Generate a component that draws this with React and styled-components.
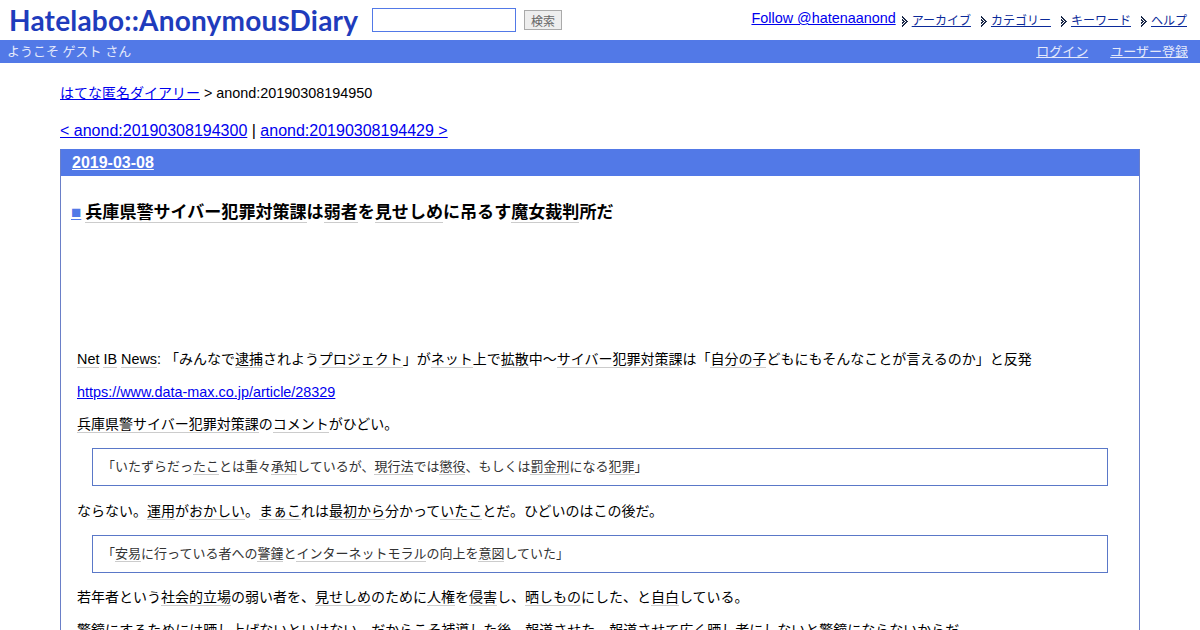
import styled, { createGlobalStyle } from 'styled-components';

const GlobalStyle = createGlobalStyle`
  html, body {
    margin: 0;
    padding: 0;
    background: #fff;
    height: 630px;
    overflow: hidden;
    font-family: 'Liberation Sans', 'Noto Sans CJK JP', sans-serif;
    font-size: 14px;
    color: #000;
  }
  a { color: #0000ee; }
`;

const Header = styled.header`
  height: 40px;
  display: flex;
  align-items: flex-start;
  justify-content: space-between;
  padding: 0 13px 0 9px;
`;

const HeaderLeft = styled.div`
  display: flex;
  align-items: flex-start;
`;

const Logo = styled.h1`
  margin: 4px 14px 0 0;
  width: 349px;
  font-family: 'Lato', sans-serif;
  font-size: 28px;
  line-height: 33px;
  font-weight: 700;
  color: #1f3cbc;
  white-space: nowrap;
  letter-spacing: 0.2px;
`;

const SearchForm = styled.form`
  display: flex;
  align-items: center;
  gap: 8px;
  margin-top: 8px;
`;

const SearchInput = styled.input`
  box-sizing: border-box;
  width: 144px;
  height: 24px;
  border: 1px solid #5279e7;
  padding: 2px 4px;
  background: #fff;
`;

const SearchButton = styled.button`
  box-sizing: border-box;
  height: 20px;
  width: 38px;
  padding: 0;
  border: 1px solid #aaa;
  background: #eee;
  color: #666;
  font-family: inherit;
  font-size: 12px;
`;

const HeaderRight = styled.nav`
  display: flex;
  align-items: flex-start;
  margin-top: 10px;
`;

const FollowLink = styled.a`
  font-size: 14.4px;
  line-height: 16px;
  margin-right: 6px;
`;

const MenuItem = styled.a`
  display: inline-flex;
  align-items: center;
  gap: 3px;
  font-size: 12px;
  line-height: 16px;
  margin-top: 3px;
  margin-left: ${({ $first }) => ($first ? '0' : '10px')};
  color: #0b2a99;
  text-decoration: none;
  span { text-decoration: underline; }
`;

// small dithered double arrow, one string per pixel row
const ARROW_ROWS = [
  '#......',
  '##.....',
  '.##....',
  '#.##...',
  '##.##..',
  '.##.##.',
  '##.##..',
  '#.##...',
  '.##....',
  '##.....',
  '#......',
];

const Arrow = () => (
  <svg width="7" height="11" viewBox="0 0 7 11" shapeRendering="crispEdges">
    {ARROW_ROWS.map((row, y) =>
      row.split('').map((c, x) =>
        c === '#' ? <rect key={`${x}-${y}`} x={x} y={y} width="1" height="1" fill="#1c2a4a" /> : null
      )
    )}
  </svg>
);

const WelcomeBar = styled.div`
  box-sizing: border-box;
  height: 23px;
  background: #5279e7;
  color: #e4e9fb;
  display: flex;
  justify-content: space-between;
  align-items: center;
  font-size: 13px;
  padding: 0 12px 3px 7px;
`;

const BarLinks = styled.div`
  display: flex;
  gap: 22px;
  a { color: #e4e9fb; }
`;

const Main = styled.main`
  padding: 21px 60px 0;
`;

const Breadcrumb = styled.div`
  font-size: 14px;
  line-height: 18px;
  height: 18px;
`;

const Latin = styled.span`
  font-size: 14.4px;
`;

const Pager = styled.div`
  margin-top: 20px;
  font-size: 16px;
  line-height: 18px;
`;

const Day = styled.section`
  margin-top: 9px;
  border: 1px solid #5279e7;
  border-color: #5279e7 #6a7fc8 #6a7fc8;
  padding-bottom: 20px;
`;

const DayHeader = styled.h2`
  margin: 0;
  height: 26px;
  padding-left: 11px;
  background: #5279e7;
  font-size: 16px;
  line-height: 26px;
  a { color: #fff; }
`;

const Section = styled.div`
  padding: 26px 16px 0;
`;

const Title = styled.h3`
  margin: 0 0 0 -6px;
  font-size: 17.06px;
  line-height: 22px;
  font-weight: 700;
  height: 141px;
`;

const Square = styled.a`
  color: #5279e7;
  margin-right: 4px;
`;

const Kw = styled.span`
  border-bottom: 1px solid #ccc;
`;

const Para = styled.p`
  margin: 0;
  font-size: 14px;
  line-height: 20.6px;
  padding: 6px 0;
`;

const Quote = styled.blockquote`
  box-sizing: border-box;
  margin: 7.6px 15px 8.4px;
  height: 38px;
  border: 1px solid #5a78c8;
  padding: 0 9px;
  font-size: 13px;
  line-height: 36px;
  color: #333;
`;

export default function App() {
  return (
    <>
      <GlobalStyle />
      <Header>
        <HeaderLeft>
          <Logo>Hatelabo::AnonymousDiary</Logo>
          <SearchForm onSubmit={(e) => e.preventDefault()}>
            <SearchInput type="text" />
            <SearchButton type="button">検索</SearchButton>
          </SearchForm>
        </HeaderLeft>
        <HeaderRight>
          <FollowLink href="#">Follow @hatenaanond</FollowLink>
          <MenuItem href="#" $first><Arrow /><span>アーカイブ</span></MenuItem>
          <MenuItem href="#"><Arrow /><span>カテゴリー</span></MenuItem>
          <MenuItem href="#"><Arrow /><span>キーワード</span></MenuItem>
          <MenuItem href="#"><Arrow /><span>ヘルプ</span></MenuItem>
        </HeaderRight>
      </Header>
      <WelcomeBar>
        <span>ようこそ ゲスト さん</span>
        <BarLinks>
          <a href="#">ログイン</a>
          <a href="#">ユーザー登録</a>
        </BarLinks>
      </WelcomeBar>
      <Main>
        <Breadcrumb>
          <a href="#">はてな匿名ダイアリー</a> <Latin>&gt; anond:20190308194950</Latin>
        </Breadcrumb>
        <Pager>
          <a href="#">&lt; anond:20190308194300</a> | <a href="#">anond:20190308194429 &gt;</a>
        </Pager>
        <Day>
          <DayHeader><a href="#">2019-03-08</a></DayHeader>
          <Section>
            <Title>
              <Square href="#">■</Square>
              <Kw>兵庫県警サイバー犯罪対策課</Kw>は<Kw>弱者</Kw>を<Kw>見せしめ</Kw>に吊るす<Kw>魔女裁判</Kw>所だ
            </Title>
            <Para>
              <Latin><Kw>Net</Kw> <Kw>IB</Kw> <Kw>News</Kw>: </Latin>「みんなで<Kw>逮捕</Kw>されよう<Kw>プロジェクト</Kw>」が<Kw>ネット</Kw>上で<Kw>拡散</Kw>中～<Kw>サイバー犯罪対策課</Kw>は「<Kw>自分の子</Kw>どもにもそんなことが言えるのか」と反発
            </Para>
            <Para><Latin><a href="#">https://www.data-max.co.jp/article/28329</a></Latin></Para>
            <Para>
              <Kw>兵庫県警サイバー犯罪対策課</Kw>の<Kw>コメント</Kw>がひどい。
            </Para>
            <Quote>
              「いたずらだっ<Kw>たこ</Kw>とは重々<Kw>承知</Kw>しているが、<Kw>現行法</Kw>では<Kw>懲役</Kw>、もしくは<Kw>罰金刑</Kw>になる<Kw>犯罪</Kw>」
            </Quote>
            <Para>
              ならない。<Kw>運用</Kw>が<Kw>おかしい</Kw>。<Kw>まぁこ</Kw>れは<Kw>最初から</Kw>分かって<Kw>いたこ</Kw>とだ。ひどいのはこの後だ。
            </Para>
            <Quote>
              「<Kw>安易</Kw>に行っている者への<Kw>警鐘</Kw>と<Kw>インターネットモラル</Kw>の向上を<Kw>意図</Kw>していた」
            </Quote>
            <Para>
              若年者という<Kw>社会的立場</Kw>の弱い者を、<Kw>見せしめ</Kw>のために<Kw>人権</Kw>を<Kw>侵害</Kw>し、<Kw>晒しもの</Kw>にした、と<Kw>自白</Kw>している。
            </Para>
            <Para>
              <Kw>警鐘</Kw>にするためには晒し上げないといけない。だからこそ<Kw>補導</Kw>した後、報道させた。報道させて広く晒し者にしないと<Kw>警鐘</Kw>にならないからだ。
            </Para>
          </Section>
        </Day>
      </Main>
    </>
  );
}
